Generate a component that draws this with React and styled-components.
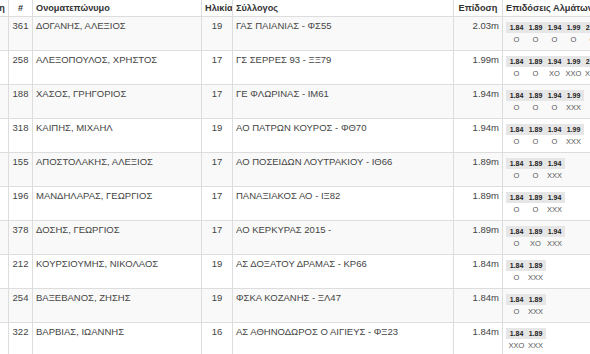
import styled, { createGlobalStyle } from 'styled-components';

const GlobalStyle = createGlobalStyle`
	html, body {
		margin: 0;
		padding: 0;
		background: #fff;
		overflow: hidden;
	}
	body {
		font-family: 'Liberation Sans', Arial, sans-serif;
		color: #333;
	}
`;

const athletes = [
	{ bib: 361, name: 'ΔΟΓΑΝΗΣ, ΑΛΕΞΙΟΣ', age: 19, club: 'ΓΑΣ ΠΑΙΑΝΙΑΣ - ΦΣ55', mark: '2.03m', heights: ['1.84', '1.89', '1.94', '1.99', '2.03'], results: ['O', 'O', 'O', 'O', 'O'] },
	{ bib: 258, name: 'ΑΛΕΞΟΠΟΥΛΟΣ, ΧΡΗΣΤΟΣ', age: 17, club: 'ΓΣ ΣΕΡΡΕΣ 93 - ΞΞ79', mark: '1.99m', heights: ['1.84', '1.89', '1.94', '1.99', '2.03'], results: ['O', 'O', 'XO', 'XXO', 'XXX'] },
	{ bib: 188, name: 'ΧΑΣΟΣ, ΓΡΗΓΟΡΙΟΣ', age: 17, club: 'ΓΕ ΦΛΩΡΙΝΑΣ - ΙΜ61', mark: '1.94m', heights: ['1.84', '1.89', '1.94', '1.99'], results: ['O', 'O', 'O', 'XXX'] },
	{ bib: 318, name: 'ΚΑΙΠΗΣ, ΜΙΧΑΗΛ', age: 19, club: 'ΑΟ ΠΑΤΡΩΝ ΚΟΥΡΟΣ - ΦΘ70', mark: '1.94m', heights: ['1.84', '1.89', '1.94', '1.99'], results: ['O', 'O', 'O', 'XXX'] },
	{ bib: 155, name: 'ΑΠΟΣΤΟΛΑΚΗΣ, ΑΛΕΞΙΟΣ', age: 17, club: 'ΑΟ ΠΟΣΕΙΔΩΝ ΛΟΥΤΡΑΚΙΟΥ - ΙΘ66', mark: '1.89m', heights: ['1.84', '1.89', '1.94'], results: ['O', 'O', 'XXX'] },
	{ bib: 196, name: 'ΜΑΝΔΗΛΑΡΑΣ, ΓΕΩΡΓΙΟΣ', age: 17, club: 'ΠΑΝΑΞΙΑΚΟΣ ΑΟ - ΙΞ82', mark: '1.89m', heights: ['1.84', '1.89', '1.94'], results: ['O', 'O', 'XXX'] },
	{ bib: 378, name: 'ΔΟΣΗΣ, ΓΕΩΡΓΙΟΣ', age: 17, club: 'ΑΟ ΚΕΡΚΥΡΑΣ 2015 -', mark: '1.89m', heights: ['1.84', '1.89', '1.94'], results: ['O', 'XO', 'XXX'] },
	{ bib: 212, name: 'ΚΟΥΡΣΙΟΥΜΗΣ, ΝΙΚΟΛΑΟΣ', age: 19, club: 'ΑΣ ΔΟΞΑΤΟΥ ΔΡΑΜΑΣ - ΚΡ66', mark: '1.84m', heights: ['1.84', '1.89'], results: ['O', 'XXX'] },
	{ bib: 254, name: 'ΒΑΞΕΒΑΝΟΣ, ΖΗΣΗΣ', age: 19, club: 'ΦΣΚΑ ΚΟΖΑΝΗΣ - ΞΛ47', mark: '1.84m', heights: ['1.84', '1.89'], results: ['O', 'XXX'] },
	{ bib: 322, name: 'ΒΑΡΒΙΑΣ, ΙΩΑΝΝΗΣ', age: 16, club: 'ΑΣ ΑΘΗΝΟΔΩΡΟΣ Ο ΑΙΓΙΕΥΣ - ΦΞ23', mark: '1.84m', heights: ['1.84', '1.89'], results: ['XXO', 'XXX'] },
];

const Table = styled.table`
	border-collapse: collapse;
	table-layout: fixed;
	width: 650px;
	margin-left: -28px;
	margin-top: -1px;

	& th,
	& td {
		border: 1px solid #ddd;
		padding: 1px 3px 0;
		text-align: left;
		vertical-align: top;
		overflow: hidden;
		white-space: nowrap;
	}

	& th {
		font-size: 9.2px;
		font-weight: bold;
		line-height: 15px;
		color: #333;
	}

	& td {
		font-size: 9.5px;
		line-height: 13px;
		padding-top: 2px;
		color: #444;
	}
`;

const Row = styled.tr`
	background: ${({ $striped }) => ($striped ? '#f9f9f9' : '#fff')};
`;

const Cell = styled.td`
	&& {
		text-align: ${({ $align }) => $align || 'left'};
	}
`;

const HeadCell = styled.th`
	&& {
		text-align: ${({ $align }) => $align || 'left'};
	}
`;

const JumpsCell = styled.td`
	&& {
		padding: 5px 3px 3px 3px;
	}
`;

const Heights = styled.div`
	display: flex;
	width: fit-content;
	height: 11px;
	background: #e6e6e6;
	padding: 0 1px;
`;

const Height = styled.span`
	width: 19px;
	text-align: center;
	font-size: 7px;
	font-weight: bold;
	line-height: 11px;
	color: #222;
`;

const Results = styled.div`
	display: flex;
	height: 14px;
	padding: 0 1px;
`;

const Result = styled.span`
	width: 19px;
	text-align: center;
	font-size: 7.5px;
	line-height: 14px;
	color: #555;
`;

const JumpSeries = ({ heights, results }) => (
	<>
		<Heights>
			{heights.map((h) => (
				<Height key={h}>{h}</Height>
			))}
		</Heights>
		<Results>
			{results.map((r, i) => (
				<Result key={i}>{r}</Result>
			))}
		</Results>
	</>
);

export default function App() {
	return (
		<>
			<GlobalStyle />
			<Table>
				<colgroup>
					<col style={{ width: 36 }} />
					<col style={{ width: 24 }} />
					<col style={{ width: 169 }} />
					<col style={{ width: 31 }} />
					<col style={{ width: 221 }} />
					<col style={{ width: 49 }} />
					<col style={{ width: 120 }} />
				</colgroup>
				<thead>
					<tr>
						<HeadCell $align="right">Θέση</HeadCell>
						<HeadCell $align="center">#</HeadCell>
						<HeadCell>Ονοματεπώνυμο</HeadCell>
						<HeadCell $align="center">Ηλικία</HeadCell>
						<HeadCell>Σύλλογος</HeadCell>
						<HeadCell $align="center">Επίδοση</HeadCell>
						<HeadCell>Επιδόσεις Αλμάτων</HeadCell>
					</tr>
				</thead>
				<tbody>
					{athletes.map((a, i) => (
						<Row key={a.bib} $striped={i % 2 === 0}>
							<Cell />
							<Cell $align="center">{a.bib}</Cell>
							<Cell>{a.name}</Cell>
							<Cell $align="center">{a.age}</Cell>
							<Cell>{a.club}</Cell>
							<Cell $align="right">{a.mark}</Cell>
							<JumpsCell>
								<JumpSeries heights={a.heights} results={a.results} />
							</JumpsCell>
						</Row>
					))}
				</tbody>
			</Table>
		</>
	);
}
